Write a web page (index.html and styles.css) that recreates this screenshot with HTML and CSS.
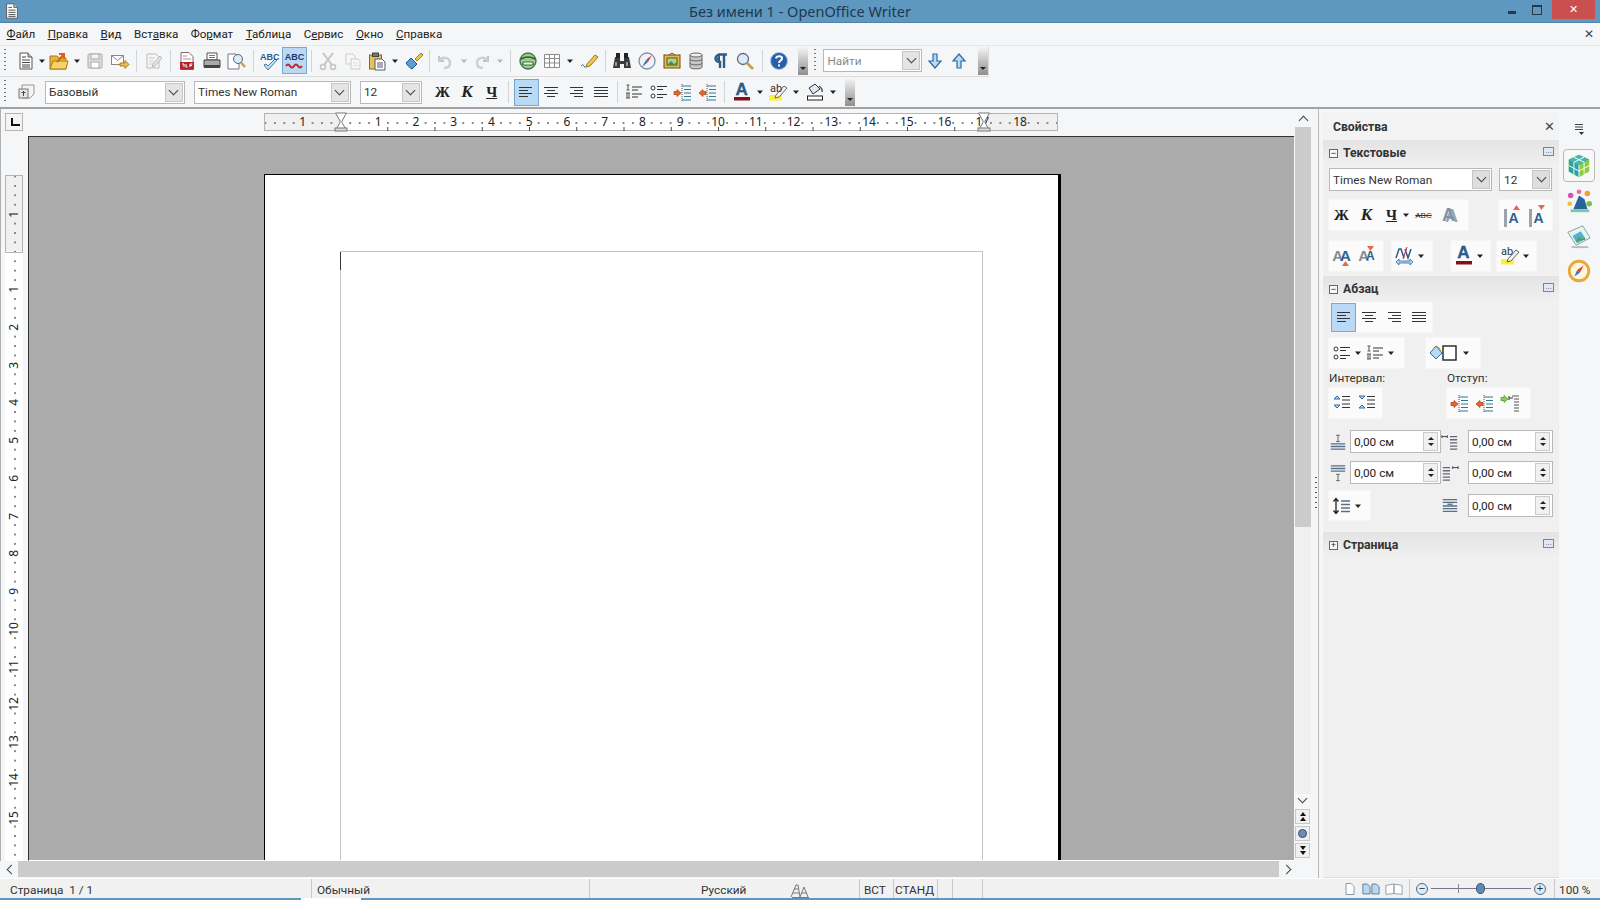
FILE: index.html
```html
<!DOCTYPE html>
<html lang="ru">
<head>
<meta charset="utf-8">
<title>Без имени 1 - OpenOffice Writer</title>
<link rel="stylesheet" href="styles.css">
</head>
<body>
<svg class="defs" width="0" height="0">
<symbol id="new" viewBox="0 0 20 20"><path d="M4 2h8l4 4v12H4z" fill="#fff" stroke="#555"/><path d="M12 2v4h4" fill="#ccc" stroke="#555"/><path d="M6 6h4M6 9h8M6 11.500h8M6 14h8M6 16h8" stroke="#444"/></symbol>
<symbol id="open" viewBox="0 0 20 20"><path d="M1 5h7l2 2h7v11H1z" fill="#e8b53a" stroke="#a87a14"/><path d="M1 18l3-8h15l-2 8z" fill="#f7d26a" stroke="#a87a14"/><path d="M8 11l7-8m-5 0h5v5" stroke="#d8641a" stroke-width="2" fill="none"/></symbol>
<symbol id="save" viewBox="0 0 20 20"><rect x="3" y="3" width="14" height="14" rx="1" fill="#ddd" stroke="#aaa"/><rect x="6" y="3" width="8" height="5" fill="#f4f4f4" stroke="#aaa"/><rect x="6" y="11" width="8" height="6" fill="#fff" stroke="#aaa"/></symbol>
<symbol id="mail" viewBox="0 0 20 20"><rect x="1.500" y="4.500" width="12" height="9" fill="#fff" stroke="#888"/><path d="M1.500 4.500l6 5 6-5" fill="none" stroke="#888"/><path d="M10 12h5v-2.500l4 4-4 4V15h-5z" fill="#f2bb4c" stroke="#b07a1c"/></symbol>
<symbol id="edit" viewBox="0 0 20 20"><path d="M4 3h9l3 3v11H4z" fill="#f6f6f6" stroke="#bbb"/><path d="M6 7h6M6 10h5M6 13h4" stroke="#ccc"/><path d="M10 13l7-8 2 2-7 8-3 1z" fill="#e4e4e4" stroke="#bbb"/></symbol>
<symbol id="pdf" viewBox="0 0 20 20"><path d="M4 1.500h8l4 4v13H4z" fill="#fff" stroke="#8a6a6a"/><path d="M6 5h4M6 8h8" stroke="#999"/><rect x="3" y="11" width="14" height="7.500" fill="#b8242c"/><path d="M5 13h2v3M9 13v3h1.500M13 13h2.500M13 14.500h2M13 13v3" stroke="#fff" fill="none"/></symbol>
<symbol id="print" viewBox="0 0 20 20"><path d="M5 2h10v7H5z" fill="#fff" stroke="#555"/><path d="M7 4.500h6M7 6.500h6" stroke="#777"/><path d="M2 9h16v7H2z" fill="#aaa" stroke="#444"/><rect x="2" y="14" width="16" height="3" fill="#444"/></symbol>
<symbol id="preview" viewBox="0 0 20 20"><path d="M2 3h8l3 3v12H2z" fill="#fff" stroke="#778"/><circle cx="12" cy="8" r="4.500" fill="#d8ecfa" stroke="#566"/><path d="M15 11.500l4 4.500" stroke="#c8a040" stroke-width="2.400"/></symbol>
<symbol id="check" viewBox="0 0 20 20"><path d="M4 13l4 5L17 8l-2-1-7 7-2-2z" fill="#c6e2f6" stroke="#3a78b0"/></symbol>
<symbol id="wave" viewBox="0 0 20 20"><path d="M2 14q2-3 4 0t4 0 4 0 4 0" fill="none" stroke="#c2242c" stroke-width="2"/></symbol>
<symbol id="cut" viewBox="0 0 20 20"><path d="M5 2l9 12M15 2L6 14" stroke="#c4c4c4" stroke-width="2"/><circle cx="5" cy="16" r="2.500" fill="none" stroke="#c4c4c4" stroke-width="1.500"/><circle cx="15" cy="16" r="2.500" fill="none" stroke="#c4c4c4" stroke-width="1.500"/></symbol>
<symbol id="copy" viewBox="0 0 20 20"><path d="M3 3h7l2 2v8H3z" fill="#f8f8f8" stroke="#ccc"/><path d="M8 8h7l2 2v8H8z" fill="#f8f8f8" stroke="#ccc"/><path d="M10 12h5M10 14.500h5" stroke="#ddd"/></symbol>
<symbol id="paste" viewBox="0 0 20 20"><rect x="2.500" y="4" width="12" height="14" fill="#e6c25c" stroke="#8a6a18"/><rect x="5.500" y="2" width="6" height="3.500" fill="#777" stroke="#444"/><path d="M8 8h7l3 3v8H8z" fill="#fff" stroke="#557"/><path d="M10 12h6M10 14h6M10 16h6" stroke="#557"/></symbol>
<symbol id="brush" viewBox="0 0 20 20"><path d="M11 8l6-6 2 2-6 6z" fill="#f2c64a" stroke="#a07c18"/><path d="M7 7l6 6-5 5c-2-1-5-4-6-6z" fill="#5d9bd6" stroke="#23568a"/></symbol>
<symbol id="undo" viewBox="0 0 20 20"><path d="M4 5v5h5" fill="none" stroke="#c2c2c2" stroke-width="2"/><path d="M4 10c3-5 11-4 11 2 0 3-2 5-6 5" fill="none" stroke="#cfcfcf" stroke-width="2.500"/></symbol>
<symbol id="redo" viewBox="0 0 20 20"><path d="M16 5v5h-5" fill="none" stroke="#c2c2c2" stroke-width="2"/><path d="M16 10c-3-5-11-4-11 2 0 3 2 5 6 5" fill="none" stroke="#cfcfcf" stroke-width="2.500"/></symbol>
<symbol id="globe" viewBox="0 0 20 20"><circle cx="10" cy="10" r="8" fill="#9bcf86" stroke="#3f6e4e" stroke-width="1.300"/><path d="M3 8q7-4 14 0M4 13h12" stroke="#2f5a3c" stroke-width="1.500" fill="none"/><path d="M5 11h10v3H5z" fill="#e6f5df" stroke="#3f6e4e"/></symbol>
<symbol id="table" viewBox="0 0 20 20"><path d="M2.500 3.500h15v13h-15zM2.500 7.500h15M2.500 12h15M7.500 3.500v13M12.500 3.500v13" fill="#fff" stroke="#8a8a8a"/></symbol>
<symbol id="pencil" viewBox="0 0 20 20"><path d="M2 15q2-3 3 0t3-1" fill="none" stroke="#3a78b0"/><path d="M8 13L16 4l3 2-8 9-4 1z" fill="#f2c64a" stroke="#9a7a20"/></symbol>
<symbol id="binoc" viewBox="0 0 20 20"><path d="M3 6h5v4h4V6h5l2 11h-7v-4H8v4H1z" fill="#3a3a3a"/><rect x="4" y="2" width="4" height="5" fill="#222"/><rect x="12" y="2" width="4" height="5" fill="#222"/><rect x="3" y="11" width="2" height="4" fill="#999"/><rect x="14" y="11" width="2" height="4" fill="#999"/></symbol>
<symbol id="nav" viewBox="0 0 20 20"><circle cx="10" cy="10" r="8" fill="#eef3fa" stroke="#7f8fa6" stroke-width="1.300"/><path d="M15 4l-4 7-2-2z" fill="#d13a32"/><path d="M5 16l4-7 2 2z" fill="#3d6fb5"/></symbol>
<symbol id="gallery" viewBox="0 0 20 20"><rect x="2" y="4" width="16" height="13" fill="#e3b94a" stroke="#6a5010"/><rect x="5" y="7" width="10" height="7" fill="#a8d49a" stroke="#6a5010"/><path d="M5 14l4-4 3 3 3-2v3z" fill="#4f8a4a"/><path d="M7 4l3-2 3 2" fill="none" stroke="#6a5010"/></symbol>
<symbol id="db" viewBox="0 0 20 20"><path d="M4 4v12c0 2.500 12 2.500 12 0V4" fill="#c8c8c8" stroke="#666"/><ellipse cx="10" cy="4" rx="6" ry="2" fill="#eee" stroke="#666"/><path d="M4 8c0 2.500 12 2.500 12 0M4 12c0 2.500 12 2.500 12 0" fill="none" stroke="#666"/></symbol>
<symbol id="pil" viewBox="0 0 20 20"><path d="M9 4H8a3.500 3.500 0 0 0 0 7h1v6M13 4v13M7 3.500h9" fill="none" stroke="#2f5c86" stroke-width="2.400"/><path d="M9 5a2.500 2.500 0 0 0-1 5h1z" fill="#2f5c86"/></symbol>
<symbol id="zoom" viewBox="0 0 20 20"><circle cx="8" cy="8" r="5.500" fill="#d8ecfa" stroke="#667" stroke-width="1.300"/><path d="M12 12l6 6" stroke="#c8a040" stroke-width="2.600"/></symbol>
<symbol id="help" viewBox="0 0 20 20"><circle cx="10" cy="10" r="8.500" fill="#2a5fa8" stroke="#a8c4e8"/><path d="M7 7.500c.5-3 6-3 6 0 0 2-3 2-3 4.500" fill="none" stroke="#fff" stroke-width="2"/><rect x="9" y="13.500" width="2" height="2" fill="#fff"/></symbol>
<symbol id="down" viewBox="0 0 20 20"><path d="M8 3h4v7h4l-6 7-6-7h4z" fill="#bcd8f0" stroke="#2c6aa8" stroke-width="1.200"/></symbol>
<symbol id="up" viewBox="0 0 20 20"><path d="M8 17h4v-7h4l-6-7-6 7h4z" fill="#bcd8f0" stroke="#2c6aa8" stroke-width="1.200"/></symbol>
<symbol id="style" viewBox="0 0 20 20"><path d="M6 3h12v9l-4 4H6z" fill="#f4f4f4" stroke="#999"/><rect x="3" y="7" width="9" height="9" fill="#e4e4e4" stroke="#777"/><path d="M7.500 9v5M5.500 10.500h4" stroke="#444"/></symbol>
<symbol id="al" viewBox="0 0 20 20"><path d="M3 5.500h13M3 8.500h9M3 11.500h13M3 14.500h9" stroke="#333" fill="none"/></symbol>
<symbol id="ac" viewBox="0 0 20 20"><path d="M3 5.500h14M6 8.500h8M3 11.500h14M6 14.500h8" stroke="#333" fill="none"/></symbol>
<symbol id="ar" viewBox="0 0 20 20"><path d="M4 5.500h13M8 8.500h9M4 11.500h13M8 14.500h9" stroke="#333" fill="none"/></symbol>
<symbol id="aj" viewBox="0 0 20 20"><path d="M3 5.500h14M3 8.500h14M3 11.500h14M3 14.500h14" stroke="#333" fill="none"/></symbol>
<symbol id="num" viewBox="0 0 20 20"><path d="M4 3v5M2.500 3h3M2.500 8h3M3 11v5M5 11v5M2 11h4M2 16h4" stroke="#555" fill="none"/><path d="M8 5h10M8 8h6M8 12h10M8 15h6" stroke="#333" fill="none"/></symbol>
<symbol id="bul" viewBox="0 0 20 20"><circle cx="4" cy="6" r="2" fill="#fff" stroke="#333"/><circle cx="4" cy="14" r="2" fill="#fff" stroke="#333"/><path d="M8 4.500h10M8 7.500h6M8 12.500h10M8 15.500h6" stroke="#333" fill="none"/></symbol>
<symbol id="indm" viewBox="0 0 20 20"><path d="M9 4h9M11 7.500h7M11 11h7M11 14.500h7M9 18h9" stroke="#2f7a96" fill="none"/><path d="M9 2v17" stroke="#555" stroke-dasharray="1 1"/><path d="M8 11l-4-3.500V9.500H1v3h3v2z" fill="#e46a2a" stroke="#a83a12" stroke-width=".7"/></symbol>
<symbol id="indp" viewBox="0 0 20 20"><path d="M9 4h9M11 7.500h7M11 11h7M11 14.500h7M9 18h9" stroke="#2f7a96" fill="none"/><path d="M9 2v17" stroke="#555" stroke-dasharray="1 1"/><path d="M1 11l4-3.500V9.500h3v3H5v2z" fill="#e46a2a" stroke="#a83a12" stroke-width=".7"/></symbol>
<symbol id="indf" viewBox="0 0 20 20"><path d="M12 3h7M14 6h5M14 9h5M14 12h5M14 15h5M14 18h5" stroke="#555" fill="none"/><path d="M9 5h4M9 3v4" stroke="#333" fill="none"/><path d="M8 6L4 2.500V4.500H1v3h3v2z" fill="#8ed04a" stroke="#4f9020" stroke-width=".7"/></symbol>
<symbol id="fc" viewBox="0 0 20 20"><rect x="2" y="15" width="16" height="3.500" fill="#8a0f14"/></symbol>
<symbol id="hl" viewBox="0 0 20 20"><rect x="1" y="13" width="13" height="5.500" fill="#fdf03a"/><path d="M8 13L16 4l3 2-8 9-4 1z" fill="#f4f4f4" stroke="#666"/></symbol>
<symbol id="bg" viewBox="0 0 20 20"><path d="M4 6l6-4 5 5-7 5z" fill="#dfe8f2" stroke="#333"/><path d="M14 4q4 3 3 6" fill="none" stroke="#555" stroke-width="1.500"/><rect x="2.500" y="14" width="15" height="4" fill="#fff" stroke="#222"/></symbol>
<symbol id="sign" viewBox="0 0 20 20"><path d="M1 16L6 4h2l2 12M10 16l4-10 4 10M3 12h6M12 12h5M4 8h4M2 16.500h17" fill="none" stroke="#777" stroke-width="1"/></symbol>
<symbol id="hour" viewBox="0 0 14 20"><path d="M1.500 1h11L8 9v1.500l4.500 8h-11l4.500-8V9z" fill="#fff" stroke="#777"/><rect x="1" y="16" width="12" height="3" fill="#ddd" stroke="#777"/></symbol>
<symbol id="v1" viewBox="0 0 14 14"><path d="M3 1.500h5l3 3v8H3z" fill="#fff" stroke="#8a98a8"/></symbol>
<symbol id="v2" viewBox="0 0 20 14"><path d="M1 1.500h5l3 3v8H1zM11 1.500h5l3 3v8h-8z" fill="#bcd6ee" stroke="#5a7894"/></symbol>
<symbol id="v3" viewBox="0 0 20 14"><path d="M1 3l9-1.500V12l-9 1zM10 1.500l9 1.500v10l-9-1z" fill="#fff" stroke="#8a98a8"/></symbol>
<symbol id="cube" viewBox="0 0 28 28"><path d="M14 2l11 5v13l-11 6-11-6V7z" fill="#8ccb3e"/><path d="M3 7l11 6v13l-11-6z" fill="#2ba3a8"/><path d="M14 2l11 5-11 6L3 7z" fill="#46b7b0"/><path d="M14 13v13M8.500 10v13M19.500 10v13M3 13.500l11 6 11-6M8.500 4.500l11 5.500M19.500 4.500l-11 5.500" stroke="#fff" fill="none"/></symbol>
<symbol id="styles2" viewBox="0 0 28 28"><circle cx="5" cy="8" r="3" fill="#d05ab0"/><circle cx="14" cy="4" r="2.500" fill="#e86aa0"/><circle cx="23" cy="6" r="3" fill="#f2a020"/><circle cx="25" cy="17" r="3" fill="#7cc040"/><circle cx="4" cy="17" r="2.500" fill="#f0c030"/><path d="M8 23l6-15 6 4 3 11z" fill="#2a62a0"/><path d="M5 23h20v3H5z" fill="#7cc8a0"/></symbol>
<symbol id="gal2" viewBox="0 0 28 28"><path d="M2 10L18 3l8 13-15 8z" fill="#e8f4f0" stroke="#78a0a8"/><path d="M7 14l9-5 5 8-9 5z" fill="#4fb0d0"/><path d="M10 20l4-5 3 2 3-1 1 2z" fill="#58a040"/><path d="M6 26h18" stroke="#bbb" stroke-width="2"/></symbol>
<symbol id="comp" viewBox="0 0 28 28"><circle cx="14" cy="14" r="10.500" fill="#fdf6e0" stroke="#e8a838" stroke-width="3"/><path d="M19 8l-4 8-3-3z" fill="#d8483a"/><path d="M9 20l3-7 3 3z" fill="#3a78c0"/></symbol>
<symbol id="cspc" viewBox="0 0 20 20"><path d="M1 12L4 3h2l3 9M10 3l3 9 3-9" fill="none" stroke="#2f5c86" stroke-width="1.500"/><path d="M12 1L8 13" stroke="#c2242c"/><path d="M1 16l3-3v2h11v-2l3 3-3 3v-2H4v2z" fill="#bcd8f0" stroke="#2c6aa8" stroke-width=".8"/></symbol>
<symbol id="brd" viewBox="0 0 30 20"><path d="M1 10l6-7 6 7-6 6z" fill="#bcd8f0" stroke="#2c6aa8"/><path d="M7 3q4 1 5 6" fill="none" stroke="#c89020"/><rect x="14" y="3" width="13" height="14" fill="#fff" stroke="#222" stroke-width="1.400"/></symbol>
<symbol id="sp1" viewBox="0 0 20 20"><path d="M2 6l3-3 3 3zM2 12l3 3 3-3z" fill="#bcd8f0" stroke="#2c6aa8"/><path d="M10 3.500h8M10 7h8M10 11h8M10 14.500h8" stroke="#333"/></symbol>
<symbol id="sp2" viewBox="0 0 20 20"><path d="M2 3l3 3 3-3zM2 15l3-3 3 3z" fill="#bcd8f0" stroke="#2c6aa8"/><path d="M10 3.500h8M10 7h8M10 11h8M10 14.500h8" stroke="#333"/></symbol>
<symbol id="ab" viewBox="0 0 20 20"><path d="M8 2.500h4M10 2.500v7M8 9.500h4" stroke="#555" fill="none"/><path d="M2 12h16M2 15h16M2 18h16" stroke="#56708a" stroke-width="1.400"/></symbol>
<symbol id="be" viewBox="0 0 20 20"><path d="M8 11.500h4M10 11.500v7M8 18.500h4" stroke="#555" fill="none"/><path d="M2 2h16M2 5h16M2 8h16" stroke="#56708a" stroke-width="1.400"/></symbol>
<symbol id="il" viewBox="0 0 20 20"><path d="M1 4h6M1 2.500v3M7 2.500v3" stroke="#333" fill="none"/><path d="M10 4h8M10 7.500h8M10 11h8M10 14.500h8M10 18h8" stroke="#667" stroke-width="1.400"/></symbol>
<symbol id="ir" viewBox="0 0 20 20"><path d="M13 4h6M13 2.500v3M19 2.500v3" stroke="#333" fill="none"/><path d="M2 4h8M2 7.500h8M2 11h8M2 14.500h8M2 18h8" stroke="#667" stroke-width="1.400"/></symbol>
<symbol id="lsb" viewBox="0 0 20 20"><path d="M2 3h16M2 6h16M2 10h16M2 13h16M2 16h16" stroke="#56708a" stroke-width="1.400"/><path d="M7 8h6" stroke="#333"/></symbol>
<symbol id="ls" viewBox="0 0 20 20"><path d="M4 3v14M1.500 5.500L4 2.500l2.500 3M1.500 14.500L4 17.500l2.500-3" fill="none" stroke="#222" stroke-width="1.300"/><path d="M9 5h9M9 8.500h9M9 12h9M9 15.500h9" stroke="#56708a" stroke-width="1.400"/></symbol>
<symbol id="tri" viewBox="0 0 8 8"><path d="M1 2.500h6L4 6z" fill="#222"/></symbol>
</svg>

<header class="title">
  <svg class="appicon" viewBox="0 0 20 20"><use href="#new"/></svg>
  <span class="title-text">Без имени 1 - OpenOffice Writer</span>
  <div class="win">
    <span class="w-min"></span>
    <span class="w-max"></span>
    <span class="w-close">✕</span>
  </div>
</header>

<nav class="menu">
  <span><u>Ф</u>айл</span><span><u>П</u>равка</span><span><u>В</u>ид</span><span>Вст<u>а</u>вка</span><span>Фо<u>р</u>мат</span><span><u>Т</u>аблица</span><span>С<u>е</u>рвис</span><span><u>О</u>кно</span><span><u>С</u>правка</span>
  <b class="docx">✕</b>
</nav>

<div class="tb tb1">
  <i class="grip"></i>
  <button class="b"><svg class="i"><use href="#new"/></svg></button><span class="dd w8"><svg class="t"><use href="#tri"/></svg></span>
  <button class="b"><svg class="i"><use href="#open"/></svg></button><span class="dd"><svg class="t"><use href="#tri"/></svg></span>
  <button class="b"><svg class="i"><use href="#save"/></svg></button>
  <button class="b"><svg class="i"><use href="#mail"/></svg></button><s class="sep"></s>
  <button class="b"><svg class="i"><use href="#edit"/></svg></button><s class="sep"></s>
  <button class="b"><svg class="i"><use href="#pdf"/></svg></button>
  <button class="b"><svg class="i"><use href="#print"/></svg></button>
  <button class="b"><svg class="i"><use href="#preview"/></svg></button><s class="sep"></s>
  <button class="b stack"><span class="abc">ABC</span><svg class="i"><use href="#check"/></svg></button>
  <button class="b on stack"><span class="abc red">ABC</span><svg class="i"><use href="#wave"/></svg></button><s class="sep"></s>
  <button class="b"><svg class="i"><use href="#cut"/></svg></button>
  <button class="b"><svg class="i"><use href="#copy"/></svg></button>
  <button class="b"><svg class="i"><use href="#paste"/></svg></button><span class="dd"><svg class="t"><use href="#tri"/></svg></span>
  <button class="b"><svg class="i"><use href="#brush"/></svg></button><s class="sep w7"></s>
  <button class="b"><svg class="i"><use href="#undo"/></svg></button><span class="dd off"><svg class="t"><use href="#tri"/></svg></span>
  <button class="b"><svg class="i"><use href="#redo"/></svg></button><span class="dd off"><svg class="t"><use href="#tri"/></svg></span><s class="sep"></s>
  <button class="b"><svg class="i"><use href="#globe"/></svg></button>
  <button class="b"><svg class="i"><use href="#table"/></svg></button><span class="dd"><svg class="t"><use href="#tri"/></svg></span>
  <button class="b"><svg class="i"><use href="#pencil"/></svg></button><s class="sep"></s>
  <button class="b"><svg class="i"><use href="#binoc"/></svg></button>
  <button class="b"><svg class="i"><use href="#nav"/></svg></button>
  <button class="b"><svg class="i"><use href="#gallery"/></svg></button>
  <button class="b"><svg class="i"><use href="#db"/></svg></button>
  <button class="b"><svg class="i"><use href="#pil"/></svg></button>
  <button class="b"><svg class="i"><use href="#zoom"/></svg></button><s class="sep"></s>
  <button class="b"><svg class="i"><use href="#help"/></svg></button>
  <span class="handle"></span>
  <i class="grip g2"></i>
  <div class="combo find"><span class="ph">Найти</span><span class="chev"></span></div>
  <button class="b"><svg class="i"><use href="#down"/></svg></button>
  <button class="b"><svg class="i"><use href="#up"/></svg></button>
  <span class="handle h2"></span>
</div>

<div class="tb tb2">
  <i class="grip"></i>
  <button class="b"><svg class="i"><use href="#style"/></svg></button>
  <div class="combo c1"><span>Базовый</span><span class="chev"></span></div>
  <div class="combo c2"><span>Times New Roman</span><span class="chev"></span></div>
  <div class="combo c3"><span>12</span><span class="chev"></span></div>
  <button class="b fx bold g8">Ж</button>
  <button class="b fx ital">К</button>
  <button class="b fx under">Ч</button><s class="sep s10"></s>
  <button class="b a on"><svg class="i"><use href="#al"/></svg></button>
  <button class="b a"><svg class="i"><use href="#ac"/></svg></button>
  <button class="b a"><svg class="i"><use href="#ar"/></svg></button>
  <button class="b a"><svg class="i"><use href="#aj"/></svg></button><s class="sep w8b"></s>
  <button class="b"><svg class="i"><use href="#num"/></svg></button>
  <button class="b"><svg class="i"><use href="#bul"/></svg></button>
  <button class="b"><svg class="i"><use href="#indm"/></svg></button>
  <button class="b"><svg class="i"><use href="#indp"/></svg></button><s class="sep"></s>
  <button class="b stack2"><span class="bigA">A</span><svg class="i"><use href="#fc"/></svg></button><span class="dd"><svg class="t"><use href="#tri"/></svg></span>
  <button class="b stack2"><span class="tinyab">ab</span><svg class="i"><use href="#hl"/></svg></button><span class="dd w10"><svg class="t"><use href="#tri"/></svg></span>
  <button class="b"><svg class="i"><use href="#bg"/></svg></button><span class="dd"><svg class="t"><use href="#tri"/></svg></span>
  <span class="handle"></span>
</div>
<div class="rule"></div>

<main class="main">
  <section class="work">
    <div class="corner"><span class="tabbtn"></span></div>
    <div class="hrule">
      <span class="rn off">1</span><span class="rn blank"></span><span class="rn">1</span><span class="rn">2</span><span class="rn">3</span><span class="rn">4</span><span class="rn">5</span><span class="rn">6</span><span class="rn">7</span><span class="rn">8</span><span class="rn">9</span><span class="rn">10</span><span class="rn">11</span><span class="rn">12</span><span class="rn">13</span><span class="rn">14</span><span class="rn">15</span><span class="rn">16</span><span class="rn">17</span><span class="rn off">18</span>
      <i class="tabs"></i>
      <svg class="hour h-l"><use href="#hour"/></svg>
      <svg class="hour h-r"><use href="#hour"/></svg>
    </div>
    <div class="vscroll">
      <span class="sb-btn"><i class="chv"></i></span>
      <span class="thumb"></span>
      <span class="track"></span>
      <span class="sb-btn rot"><i class="chv"></i></span>
      <span class="nav-btn"><b class="tu"></b><b class="tu"></b></span>
      <span class="nav-btn"><b class="dot"></b></span>
      <span class="nav-btn"><b class="td"></b><b class="td"></b></span>
    </div>
    <div class="vcol">
      <div class="vrule">
        <span class="vn off">1</span><span class="vn blank"></span><span class="vn">1</span><span class="vn">2</span><span class="vn">3</span><span class="vn">4</span><span class="vn">5</span><span class="vn">6</span><span class="vn">7</span><span class="vn">8</span><span class="vn">9</span><span class="vn">10</span><span class="vn">11</span><span class="vn">12</span><span class="vn">13</span><span class="vn">14</span><span class="vn">15</span>
      </div>
    </div>
    <div class="canvas">
      <div class="page"><div class="textbox"><i class="caret"></i></div></div>
    </div>
    <div class="hscroll">
      <span class="hb"><i class="chv left"></i></span><span class="hthumb"></span><span class="hb"><i class="chv right"></i></span>
    </div>
  </section>

  <aside class="side">
    <div class="deck">
      <div class="deck-title"><span>Свойства</span><b>✕</b></div>

      <div class="sec"><i class="pm">−</i><span>Текстовые</span><i class="more">…</i></div>
      <div class="body b-text">
        <div class="row r-fonts">
          <div class="combo pf"><span>Times New Roman</span><span class="chev"></span></div>
          <div class="combo ps"><span>12</span><span class="chev"></span></div>
        </div>
        <div class="row r-fmt">
          <div class="grp g-fmt">
            <span class="pb fx bold">Ж</span><span class="pb fx ital">К</span><span class="pb fx under">Ч</span><svg class="t t6"><use href="#tri"/></svg><span class="pb strike">ABC</span><span class="pb shadowA">A</span>
          </div>
          <div class="grp g-sup">
            <span class="pb lett"><b>A</b><i class="up-red"></i></span><span class="pb lett"><b>A</b><i class="dn-red"></i></span>
          </div>
        </div>
        <div class="row r-col">
          <div class="grp g-size"><span class="pb lett2"><b>A</b><b class="blue">A</b><i class="up-red"></i></span><span class="pb lett2"><b>A</b><b class="blue small">A</b><i class="dn-red"></i></span></div>
          <div class="grp g-sp"><span class="pb"><svg class="i"><use href="#cspc"/></svg></span><svg class="t"><use href="#tri"/></svg></div>
          <div class="grp g-fc"><span class="pb stack2"><span class="bigA">A</span><svg class="i"><use href="#fc"/></svg></span><svg class="t"><use href="#tri"/></svg></div>
          <div class="grp g-hl"><span class="pb stack2"><span class="tinyab">ab</span><svg class="i"><use href="#hl"/></svg></span><svg class="t"><use href="#tri"/></svg></div>
        </div>
      </div>

      <div class="sec"><i class="pm">−</i><span>Абзац</span><i class="more">…</i></div>
      <div class="body b-para">
        <div class="grp g-al"><span class="pb a on"><svg class="i"><use href="#al"/></svg></span><span class="pb a"><svg class="i"><use href="#ac"/></svg></span><span class="pb a"><svg class="i"><use href="#ar"/></svg></span><span class="pb a"><svg class="i"><use href="#aj"/></svg></span></div>
        <div class="row r-list">
          <div class="grp g-list"><span class="pb"><svg class="i"><use href="#bul"/></svg></span><svg class="t"><use href="#tri"/></svg><span class="pb"><svg class="i"><use href="#num"/></svg></span><svg class="t"><use href="#tri"/></svg></div>
          <div class="grp g-brd"><svg class="brd"><use href="#brd"/></svg><svg class="t"><use href="#tri"/></svg></div>
        </div>
        <div class="row r-labels"><span class="lb-a">Интервал:</span><span class="lb-b">Отступ:</span></div>
        <div class="row r-sp">
          <div class="grp g-spc"><span class="pb"><svg class="i"><use href="#sp1"/></svg></span><span class="pb"><svg class="i"><use href="#sp2"/></svg></span></div>
          <div class="grp g-ind"><span class="pb"><svg class="i"><use href="#indm"/></svg></span><span class="pb"><svg class="i"><use href="#indp"/></svg></span><span class="pb"><svg class="i"><use href="#indf"/></svg></span></div>
        </div>
        <div class="spins">
          <svg class="si"><use href="#ab"/></svg><div class="spin"><span>0,00 см</span><span class="updn"><b class="tu"></b><b class="td"></b></span></div>
          <svg class="si"><use href="#il"/></svg><div class="spin"><span>0,00 см</span><span class="updn"><b class="tu"></b><b class="td"></b></span></div>
          <svg class="si"><use href="#be"/></svg><div class="spin"><span>0,00 см</span><span class="updn"><b class="tu"></b><b class="td"></b></span></div>
          <svg class="si"><use href="#ir"/></svg><div class="spin"><span>0,00 см</span><span class="updn"><b class="tu"></b><b class="td"></b></span></div>
          <div class="grp g-ls"><span class="pb"><svg class="i"><use href="#ls"/></svg></span><svg class="t"><use href="#tri"/></svg></div>
          <svg class="si"><use href="#lsb"/></svg><div class="spin"><span>0,00 см</span><span class="updn"><b class="tu"></b><b class="td"></b></span></div>
        </div>
      </div>

      <div class="sec"><i class="pm">+</i><span>Страница</span><i class="more">…</i></div>
      <div class="rest"></div>
    </div>

    <div class="tabs-col">
      <svg class="tabmenu" viewBox="0 0 14 14"><path d="M3 2.500h8M3 5h8M3 7.500h8" stroke="#444"/><path d="M7 10h5l-2.500 3z" fill="#333"/></svg>
      <span class="tab active"><svg class="ti"><use href="#cube"/></svg></span>
      <span class="tab"><svg class="ti"><use href="#styles2"/></svg></span>
      <span class="tab"><svg class="ti"><use href="#gal2"/></svg></span>
      <span class="tab"><svg class="ti"><use href="#comp"/></svg></span>
    </div>
  </aside>
</main>

<footer class="status">
  <span class="st s-page">Страница &nbsp;1 / 1</span>
  <span class="st s-style">Обычный</span>
  <span class="st s-lang">Русский</span>
  <span class="st s-sign"><svg class="i"><use href="#sign"/></svg></span>
  <span class="st s-ins">ВСТ</span>
  <span class="st s-std">СТАНД</span>
  <span class="st s-e1"></span>
  <span class="st s-e2"></span>
  <span class="st s-views"><svg class="v1"><use href="#v1"/></svg><svg class="v2"><use href="#v2"/></svg><svg class="v2"><use href="#v3"/></svg></span>
  <span class="st s-zoom"><b class="z">−</b><span class="slider"><i class="mid"></i><i class="knob"></i></span><b class="z">+</b></span>
  <span class="st s-pct">100 %</span>
</footer>
<div class="foot"><span class="foot-tab"></span></div>
</body>
</html>
```

FILE: styles.css
```css
* { box-sizing: border-box; }
html, body { margin: 0; padding: 0; }
body {
  width: 1600px; height: 900px; overflow: hidden;
  display: flex; flex-direction: column;
  background: #f5f6f7; color: #222;
  font: 11.800px Roboto, "Noto Sans", sans-serif;
}
.defs { position: absolute; }
i, s, b { font-style: normal; text-decoration: none; }

/* title */
.title { height: 23px; flex: none; background: #5e97bf; display: flex; align-items: center; border-bottom: 1px solid #4f83a8; padding-left: 3px; }
.appicon { width: 18px; height: 18px; flex: none; }
.title-text { flex: 1; text-align: center; font: 14.500px "Noto Sans", sans-serif; color: #22384c; padding-left: 75px; }
.win { display: flex; align-items: flex-start; align-self: flex-start; width: 96px; padding-right: 5px; flex: none; }
.w-min { width: 8px; height: 3px; background: #26384a; margin: 11px 16px 0 4px; flex: none; }
.w-max { width: 10px; height: 10px; border: 1.500px solid #26384a; margin: 5px 10px 0 0; box-shadow: inset 0 1px #26384a; flex: none; }
.w-close { width: 43px; height: 19px; background: #c9504f; color: #fff; font-size: 11px; text-align: center; line-height: 19px; flex: none; }

/* menu */
.menu { height: 23px; flex: none; display: flex; align-items: center; gap: 12.500px; padding-left: 6.500px; color: #222; font-size: 11.600px; border-bottom: 1px solid #e8e8e8; }
.docx { margin-left: auto; margin-right: 6px; color: #444; font-weight: 400; font-size: 12px; }

/* toolbars */
.tb { height: 30px; flex: none; display: flex; align-items: center; position: relative; }
.tb1 { width: 989px; margin-top: 1px; padding-bottom: 2px; border-bottom: 1px solid #dcdcdc; border-right: 1px solid #dcdcdc; }
.tb2 { width: 855px; border-right: 1px solid #dcdcdc; }
.rule { height: 2px; flex: none; background: #a2a2a2; }
.grip { width: 13.750px; height: 24px; flex: none; background: repeating-linear-gradient(#777 0 1px, transparent 1px 4px) 4px 0 / 2px 100% no-repeat; }
.g2 { width: 13px; margin-left: 2.500px; background-position: 4px 0; }
.b { width: 24.600px; height: 27px; flex: none; padding: 0; border: 1px solid transparent; background: none; display: flex; align-items: center; justify-content: center; position: relative; font: inherit; color: #222; }
.b.on, .pb.on { background: #b9d9f5; border: 1px solid #7aa8d0; }
.b.a { width: 25px; }
.i { width: 20px; height: 20px; flex: none; }
.dd { width: 12px; flex: none; display: flex; justify-content: center; }
.dd.w8 { width: 8px; }
.dd.w10 { width: 11.700px; }
.dd.off { opacity: .3; }
.t { width: 8px; height: 8px; flex: none; }
.sep { width: 9px; height: 22px; flex: none; background: linear-gradient(#d4d4d4, #d4d4d4) center / 1px 100% no-repeat; }
.sep.w7 { width: 7px; }
.sep.s10 { width: 10px; }
.sep.w8b { width: 8px; }
.handle { width: 10px; height: 28px; flex: none; margin-left: 6.700px; background: linear-gradient(#f5f5f5, #8f8f8f); position: relative; }
.handle::after { content: ""; position: absolute; left: 2px; bottom: 5px; border: 3px solid transparent; border-top-color: #222; border-bottom: 0; }
.h2 { margin-left: 6.500px; }
.abc { position: absolute; top: 3px; left: 0; right: 0; text-align: center; font: 700 9px/12px "Liberation Sans", sans-serif; color: #2a5e90; }
.abc.red { color: #223a6a; }
.stack .i { margin-top: 3px; }
.stack2 { position: relative; }
.bigA { position: absolute; left: 0; right: 0; top: 0; text-align: center; font: 700 17px/19px "Liberation Sans", sans-serif; color: #2c5f92; -webkit-text-stroke: .3px #143a60; z-index: 1; }
.tinyab { position: absolute; left: 3px; top: 2px; font-size: 11px; line-height: 13px; color: #333; z-index: 1; }

/* combos */
.combo { height: 23px; flex: none; background: #fff; border: 1px solid #b8b8b8; display: flex; align-items: center; justify-content: space-between; padding-left: 3px; color: #333; }
.chev { width: 18px; height: 19px; margin-right: 1px; background: #e4e4e4; border: 1px solid #c6c6c6; position: relative; flex: none; }
.chev::after { content: ""; position: absolute; left: 4.500px; top: 3px; width: 6px; height: 6px; border: solid #444; border-width: 0 1.500px 1.500px 0; transform: rotate(45deg); }
.c1 { width: 140px; margin-left: 6.650px; }
.c2 { width: 157px; margin-left: 9px; }
.c3 { width: 62px; margin-left: 9px; }
.find { width: 99px; margin-left: 0; }
.ph { color: #8a8a8a; }
.fx { font-family: "Liberation Serif", serif; font-size: 15px; font-weight: 700; color: #222; }
.g8 { margin-left: 8.200px; }
.ital { font-style: italic; font-size: 17px; }
.under { text-decoration: underline; }

/* main */
.main { height: 769px; flex: none; display: flex; }
.work { width: 1315px; flex: none; display: grid; grid-template-columns: 28px 1266px 21px; grid-template-rows: 27px 725px 17px; }
.corner { padding: 4px 0 0 5px; border-left: 1px solid #b0b0b0; }
.corner .tabbtn { display: block; margin-left: -1px; width: 18px; height: 18px; border: 1px solid #b4b4b4; background: #f4f4f4; position: relative; }
.tabbtn::after { content: ""; position: absolute; left: 5px; top: 4px; width: 7px; height: 6px; border: solid #111; border-width: 0 0 2.500px 2.500px; }

/* h ruler */
.hrule { grid-column: 2; margin: 4px 0 5px 236px; width: 794px; height: 18px; border: 1px solid #b4b4b4; position: relative; display: flex; align-items: center; padding-left: 18.900px;
  background-image:
    linear-gradient(90deg, #888 1.500px, transparent 1.500px),
    linear-gradient(90deg, #f0f0f0 75.500px, #fff 75.500px, #fff 718.500px, #f0f0f0 718.500px);
  background-size: 9.437px 1.500px, 100% 100%;
  background-position: -0.500px 7.500px, 0 0;
  background-repeat: repeat-x, no-repeat;
}
.rn { width: 37.750px; flex: none; display: flex; justify-content: center; font: 12px/16px "Noto Sans", sans-serif; }
.rn:not(.blank) { background: linear-gradient(#fff, #fff) center / 12px 100% no-repeat; }
.rn.off { background: linear-gradient(#f0f0f0, #f0f0f0) center / 12px 100% no-repeat; }
.tabs { position: absolute; left: 75.500px; width: 643px; bottom: -1px; height: 4px; background: linear-gradient(90deg, transparent calc(100% - 1px), #444 calc(100% - 1px)) 0 0 / 47.250px 100% repeat-x; }
.hour { position: absolute; width: 14px; height: 20px; top: -2px; }
.h-l { left: 69px; }
.h-r { left: 712px; }

/* v ruler */
.vcol { grid-column: 1; grid-row: 2; padding: 39px 5px 0 4px; border-left: 1px solid #b0b0b0; }
.vrule { height: 686px; width: 18px; overflow: hidden; display: flex; flex-direction: column; align-items: center; padding-top: 19.500px; position: relative;
  background-image:
    linear-gradient(#888 1.500px, transparent 1.500px),
    linear-gradient(#f0f0f0 76px, #fff 76px);
  background-size: 1.500px 9.437px, 100% 100%;
  background-position: 8.500px 0.500px, 0 0;
  background-repeat: repeat-y, no-repeat;
}
.vrule::before { content: ""; position: absolute; left: 0; right: 0; top: 0; height: 76px; border: 1px solid #b4b4b4; }
.vn { height: 37.750px; flex: none; writing-mode: vertical-rl; transform: rotate(180deg); text-align: center; font: 12px/16px "Noto Sans", sans-serif; width: 16px; }
.vn:not(.blank) { background: linear-gradient(#fff, #fff) center / 100% 12px no-repeat; }
.vn.off { background: linear-gradient(#f0f0f0, #f0f0f0) center / 100% 12px no-repeat; }

/* canvas */
.canvas { grid-column: 2; grid-row: 2; background: #ababab; border-top: 1px solid #333; border-left: 1px solid #333; overflow: hidden; padding: 37px 0 0 235px; border-bottom: 1px solid #fff; }
.page { width: 797px; height: 1100px; background: #fff; border-top: 1px solid #000; border-left: 1px solid #000; border-right: 3px solid #000; padding: 76px 0 0 75px; }
.textbox { width: 643px; height: 900px; border: 1px solid #c4c4c4; }
.caret { display: block; width: 1px; height: 18px; margin-left: -1px; background: #333; }

/* v scroll */
.vscroll { grid-column: 3; grid-row: 1 / 3; display: flex; flex-direction: column; align-items: flex-start; padding-left: 1px; }
.sb-btn { width: 16px; height: 18px; flex: none; display: flex; align-items: center; justify-content: center; }
.sb-btn.rot { transform: rotate(180deg); height: 14px; margin-bottom: 1px; }
.chv { display: block; width: 7px; height: 7px; border: solid #444; border-width: 1.500px 0 0 1.500px; transform: translateY(2px) rotate(45deg); }
.chv.left { transform: translateX(2px) rotate(-45deg); }
.chv.right { transform: translateX(-2px) rotate(135deg); }
.thumb { width: 16px; height: 400px; flex: none; background: #cbcbcb; }
.track { width: 16px; flex: 1; background: #f0f0f0; }
.nav-btn { width: 15px; height: 15px; margin: 0 0 2px 0; flex: none; border: 1px solid #c8c8c8; background: #f0f0f0; display: flex; flex-direction: column; align-items: center; justify-content: center; gap: 1px; }
.nav-btn:last-child { margin-bottom: 3px; }
.tu { display: block; width: 0; height: 0; border: 3.500px solid transparent; border-top: 0; border-bottom: 4px solid #111; }
.td { display: block; width: 0; height: 0; border: 3.500px solid transparent; border-bottom: 0; border-top: 4px solid #111; }
.dot { display: block; width: 9px; height: 9px; border-radius: 50%; background: #6c8eb0; border: 1px solid #34506c; }

/* h scroll */
.hscroll { grid-column: 1 / 3; grid-row: 3; display: flex; align-items: stretch; padding-bottom: 1px; }
.hb { width: 18px; flex: none; display: flex; align-items: center; justify-content: center; }
.hthumb { width: 1261px; flex: none; background: #cbcbcb; }

/* side */
.side { width: 285px; flex: none; padding-left: 4px; display: flex; border-right: 2px solid #f5f6f7; position: relative; }
.side::before { content: ""; position: absolute; left: 3px; top: 0; bottom: 0; width: 1px; background: #b8b8b8; }
.side::after { content: ""; position: absolute; left: 0; top: 368px; height: 34px; width: 2px; background: repeating-linear-gradient(#555 0 1px, transparent 1px 5px); }
.deck { width: 236px; margin-left: 4px; flex: none; background: #f0f0f0; display: flex; flex-direction: column; margin-top: 3px; }
.deck-title { height: 28px; flex: none; display: flex; align-items: center; justify-content: space-between; padding: 1px 4px 0 10px; font-weight: 700; font-size: 12.200px; background: #f3f3f3; color: #333; }
.deck-title b { color: #444; font-weight: 400; font-size: 13px; }
.sec { height: 26px; flex: none; display: flex; align-items: center; padding-left: 6px; font-weight: 700; font-size: 12.200px; color: #333; background: linear-gradient(#e3e3e3, #f0f0f0); position: relative; gap: 5px; }
.pm { width: 9px; height: 9px; border: 1px solid #666; background: #f8f8f8; font: 400 9px/6px "Liberation Sans", sans-serif; text-align: center; color: #222; flex: none; }
.more { position: absolute; left: 220px; top: 7px; width: 11px; height: 9px; border: 1px solid #6a8aa8; background: #dfeaf4; font: 400 7px/5px "Liberation Sans", sans-serif; text-align: center; color: #234; }
.body { padding: 0 7px 0 6px; }
.row { display: flex; }
.b-text { height: 110px; padding-top: 2px; flex: none; }
.r-fonts { justify-content: space-between; }
.pf { width: 163px; }
.ps { width: 53px; padding-left: 4px; }
.pf .chev, .ps .chev { background: #dedede; }
.r-fmt { justify-content: space-between; margin-top: 9px; }
.r-col { margin-top: 11px; }
.grp { display: flex; align-items: center; background: #fbfbfb; height: 30px; flex: none; box-shadow: 0 0 0 1px #f5f5f5; }
.pb { width: 25px; height: 28px; flex: none; display: flex; align-items: center; justify-content: center; position: relative; color: #222; border: 1px solid transparent; }
.g-fmt { width: 139px; }
.g-fmt .t6 { margin-left: -2px; margin-right: 1px; }
.strike { font: 400 8px "Liberation Sans", sans-serif; text-decoration: line-through; color: #333; }
.shadowA { font: 700 18px "Liberation Sans", sans-serif; color: #7f94aa; text-shadow: 3px 1px 0 #98a4b0; }
.g-sup { width: 53px; }
.lett { font: 700 14px "Liberation Sans", sans-serif; color: #2c5f92; }
.lett b { border-left: 3px solid #9aa4ae; padding-left: 1px; line-height: 18px; margin-top: 6px; }
.up-red, .dn-red { position: absolute; right: 3px; top: 3px; width: 7px; height: 5px; background: #e66a4a; }
.up-red { clip-path: polygon(50% 0, 100% 100%, 0 100%); }
.dn-red { clip-path: polygon(0 0, 100% 0, 50% 100%); }
.lett2 { font: 700 15px/18px "Liberation Sans", sans-serif; color: #7f8c98; }
.lett2 .blue { color: #2c5f92; margin-left: -3px; }
.lett2 .small { font-size: 12px; }
.lett2 .up-red, .lett2 .dn-red { top: auto; bottom: 3px; right: 4px; }
.lett2 .dn-red { top: 3px; bottom: auto; }
.g-size { width: 54px; }
.g-sp { width: 40px; margin-left: 9px; }
.g-fc { width: 39px; margin-left: 19px; }
.g-hl { width: 39px; margin-left: 7px; }
.b-para { padding-top: 0; flex: none; height: 230px; }
.g-al { width: 101px; margin-left: 2px; }
.g-al .pb { height: 29px; }
.r-list { margin-top: 6px; }
.g-list { width: 75px; }
.g-brd { width: 54px; margin-left: 22px; padding-left: 3px; gap: 3px; }
.brd { width: 30px; height: 20px; flex: none; }
.r-labels { height: 20px; align-items: center; color: #333; }
.lb-a { width: 118px; }
.g-spc { width: 53px; }
.g-ind { width: 83px; margin-left: 65px; }
.spins { display: grid; grid-template-columns: 21px 91px 27px 85px; grid-template-rows: 23px 23px 27px; row-gap: 8px; margin-top: 12px; align-items: center; }
.si { width: 18px; height: 20px; }
.spin { height: 23px; background: #fff; border: 1px solid #b8b8b8; display: flex; align-items: center; justify-content: space-between; padding-left: 3px; }
.updn { width: 15px; height: 19px; margin-right: 2px; background: #f0f0f0; border: 1px solid #ccc; display: flex; flex-direction: column; align-items: center; justify-content: center; gap: 3px; }
.updn .tu { border-width: 3px; border-top: 0; border-bottom: 3px solid #222; }
.updn .td { border-width: 3px; border-bottom: 0; border-top: 3px solid #222; }
.g-ls { grid-column: 1 / 3; width: 41px; height: 29px; }
.rest { flex: 1; background: #f0f0f0; border-bottom: 1px solid #ddd; }
.tabs-col { flex: 1; display: flex; flex-direction: column; align-items: center; padding-top: 13px; }
.tabmenu { width: 14px; height: 14px; margin-bottom: 13px; }
.tab { width: 32px; height: 33px; margin-bottom: 2px; display: flex; align-items: center; justify-content: center; border: 1px solid transparent; border-radius: 4px; }
.tab.active { border-color: #b8b8b8; background: #f8f8f8; }
.ti { width: 26px; height: 26px; }

/* status */
.status { height: 20px; flex: none; display: flex; align-items: center; background: #f1f1f1; border-top: 1px solid #fff; position: relative; }
.st { height: 100%; flex: none; display: flex; align-items: center; border-right: 1px solid #c8c8c8; color: #333; line-height: 1; padding-top: 4px; }
.s-page { width: 312px; padding-left: 10px; }
.s-style { width: 278px; padding-left: 5px; }
.s-lang { width: 200px; padding-left: 111px; border-right: 0; }
.s-sign { width: 70px; }
.s-ins { width: 34px; padding-left: 4px; }
.s-std { width: 44px; padding-left: 1px; overflow: hidden; white-space: nowrap; }
.s-e1 { width: 15px; }
.s-e2 { width: 30px; }
.s-views { width: 427px; padding-left: 360px; justify-content: flex-start; gap: 5px; padding-top: 0; }
.s-views svg { height: 14px; flex: none; }
.v1 { width: 14px; }
.v2 { width: 18px; }
.s-zoom { width: 145px; padding-left: 6px; padding-top: 0; }
.z { width: 12px; height: 12px; flex: none; border-radius: 50%; border: 1px solid #4c6c8a; background: #dfeaf4; font: 400 11px/9px "Liberation Sans", sans-serif; text-align: center; color: #234; }
.slider { flex: none; width: 100px; height: 1px; background: #778; position: relative; margin: 0 3px; }
.mid { position: absolute; left: 27px; top: -4px; width: 1px; height: 9px; background: #888; }
.knob { position: absolute; left: 45px; top: -5px; width: 9px; height: 11px; border-radius: 50%; background: #5e8ab0; border: 1px solid #2f5472; }
.s-pct { padding-left: 4px; border-right: 0; }
.foot { height: 2px; flex: none; background: #5e97bf; position: relative; }
.foot-tab { display: block; position: absolute; left: 301px; top: 0; width: 60px; height: 2px; background: #fff; }
```
